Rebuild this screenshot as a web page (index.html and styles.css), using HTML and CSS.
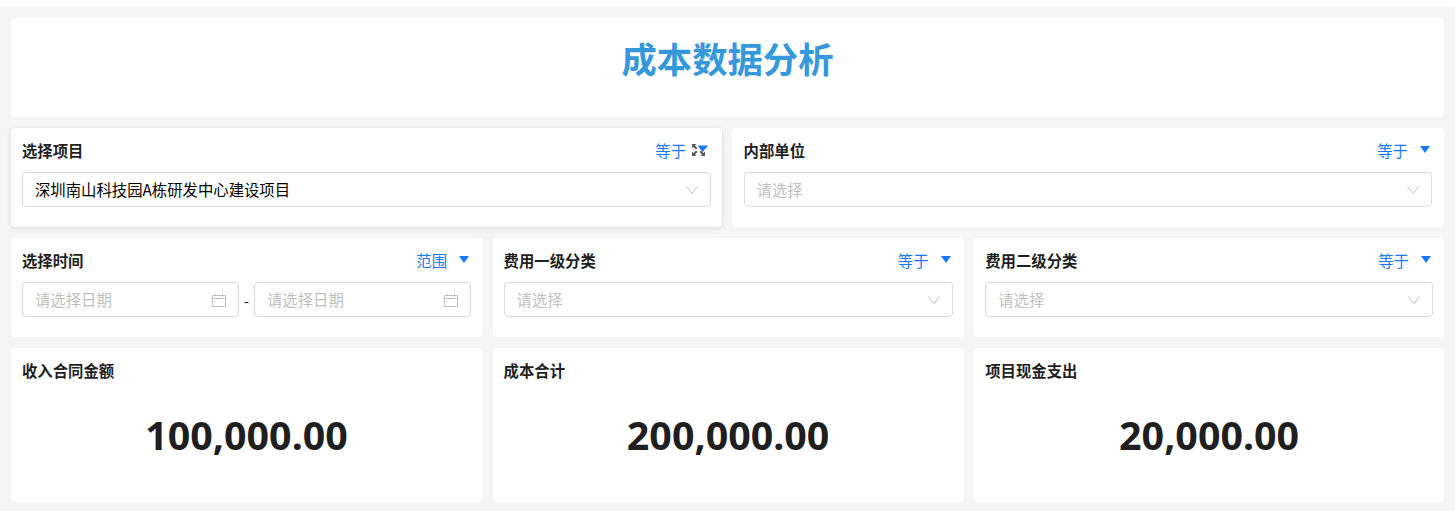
FILE: index.html
```html
<!DOCTYPE html>
<html lang="zh-CN">
<head>
    <meta charset="UTF-8">
    <title>成本数据分析</title>
    <link rel="stylesheet" href="styles.css">
</head>
<body>
    <div class="page">
        <div class="card title-card"><h1>成本数据分析</h1></div>

        <div class="row row-2">
            <div class="card filter raised">
                <div class="filter-head">
                    <span class="filter-name">选择项目</span>
                    <span class="op">等于
                        <svg class="move-icon" width="18" height="14" viewBox="0 0 18 14">
                            <path d="M1 1h4.500L4 2.500l2.500 2.500-1.500 1.500L2.500 4 1 5.500zM14 13H9.500L11 11.500 8.500 9 10 7.500l2.500 2.500L14 8.500zM1 13V8.500l1.500 1.500L5 7.500 6.500 9 4 11.500 5.500 13z" fill="#595959"/>
                            <path d="M6.500 2.500h10.500l-5.250 6.500z" fill="#1677ff"/>
                        </svg>
                    </span>
                </div>
                <div class="select filled">深圳南山科技园A栋研发中心建设项目
                    <svg class="chevron" width="12" height="8" viewBox="0 0 12 8"><path d="M.5 .5l5.500 7 5.500-7" stroke="#bfbfbf" fill="none"/></svg>
                </div>
            </div>
            <div class="card filter">
                <div class="filter-head">
                    <span class="filter-name">内部单位</span>
                    <span class="op">等于 <i class="caret"></i></span>
                </div>
                <div class="select">请选择
                    <svg class="chevron" width="12" height="8" viewBox="0 0 12 8"><path d="M.5 .5l5.500 7 5.500-7" stroke="#bfbfbf" fill="none"/></svg>
                </div>
            </div>
        </div>

        <div class="row row-3">
            <div class="card filter">
                <div class="filter-head">
                    <span class="filter-name">选择时间</span>
                    <span class="op">范围 <i class="caret"></i></span>
                </div>
                <div class="date-range">
                    <div class="select">请选择日期
                        <svg class="calendar" width="14" height="14" viewBox="0 0 14 14"><path d="M.5 2.500h13v11H.5zM.5 5.500h13M3.500 .5v3M10.500 .5v3" stroke="#bfbfbf" fill="none"/></svg>
                    </div>
                    <span class="dash">-</span>
                    <div class="select">请选择日期
                        <svg class="calendar" width="14" height="14" viewBox="0 0 14 14"><path d="M.5 2.500h13v11H.5zM.5 5.500h13M3.500 .5v3M10.500 .5v3" stroke="#bfbfbf" fill="none"/></svg>
                    </div>
                </div>
            </div>
            <div class="card filter">
                <div class="filter-head">
                    <span class="filter-name">费用一级分类</span>
                    <span class="op">等于 <i class="caret"></i></span>
                </div>
                <div class="select">请选择
                    <svg class="chevron" width="12" height="8" viewBox="0 0 12 8"><path d="M.5 .5l5.500 7 5.500-7" stroke="#bfbfbf" fill="none"/></svg>
                </div>
            </div>
            <div class="card filter">
                <div class="filter-head">
                    <span class="filter-name">费用二级分类</span>
                    <span class="op">等于 <i class="caret"></i></span>
                </div>
                <div class="select">请选择
                    <svg class="chevron" width="12" height="8" viewBox="0 0 12 8"><path d="M.5 .5l5.500 7 5.500-7" stroke="#bfbfbf" fill="none"/></svg>
                </div>
            </div>
        </div>

        <div class="row row-3">
            <div class="card stat">
                <span class="filter-name">收入合同金额</span>
                <div class="stat-value">100,000.00</div>
            </div>
            <div class="card stat">
                <span class="filter-name">成本合计</span>
                <div class="stat-value">200,000.00</div>
            </div>
            <div class="card stat">
                <span class="filter-name">项目现金支出</span>
                <div class="stat-value">20,000.00</div>
            </div>
        </div>
    </div>
</body>
</html>
```

FILE: styles.css
```css
html, body {
    margin: 0;
    height: 100%;
    background: #fff;
    overflow: hidden;
}

body {
    font-family: "Noto Sans CJK SC", "Noto Sans", sans-serif;
    color: #1f1f1f;
    font-size: 15.36px;
}

.page {
    margin-top: 7px;
    padding: 11px 11px 9px;
    background: #f5f5f5;
    display: flex;
    flex-direction: column;
    gap: 11px;
}

.row {
    display: grid;
}

.row-2 {
    column-gap: 10.4px;
    grid-template-columns: 711px 711.6px;
}

.row-2 .filter + .filter {
    padding-left: 11.2px;
    padding-right: 12px;
}

.row-3 {
    column-gap: 10.6px;
    grid-template-columns: 471px 471px 469.8px;
}

.card {
    background: #fff;
    border-radius: 4px;
    box-sizing: border-box;
}

.raised {
    box-shadow: 0 1px 5px rgba(0, 0, 0, 0.12);
}

.title-card {
    height: 99px;
    padding-top: 14px;
    display: flex;
    justify-content: center;
}

h1 {
    margin: 0;
    font-size: 35.36px;
    font-weight: 700;
    line-height: 52px;
    color: #3498db;
}

.filter {
    height: 99px;
    padding: 11px 11px 0;
}

.filter-head {
    display: flex;
    justify-content: space-between;
    align-items: center;
    height: 21px;
    margin-bottom: 12px;
}

.filter-head .filter-name {
    padding-top: 2px;
}

.filter-name {
    font-size: 15.36px;
    font-weight: 700;
    line-height: 21px;
    color: #1f1f1f;
}

.op {
    display: flex;
    align-items: center;
    color: #1677ff;
    font-size: 15.36px;
}

.caret {
    width: 0;
    height: 0;
    margin: 0 2px 0 12px;
    border-left: 5.500px solid transparent;
    border-right: 5.500px solid transparent;
    border-top: 7px solid #1677ff;
}

.move-icon {
    margin-left: 5px;
    margin-right: 2px;
}

.select {
    height: 35px;
    box-sizing: border-box;
    border: 1px solid #d9d9d9;
    border-radius: 4px;
    padding: 0 12px 2px 12px;
    display: flex;
    align-items: center;
    justify-content: space-between;
    color: #bfbfbf;
}

.select.filled {
    color: #000;
}

.chevron,
.calendar {
    margin-top: 2px;
}

.date-range {
    display: grid;
    grid-template-columns: 217px 1fr 217px;
    align-items: center;
}

.dash {
    text-align: center;
    color: #1f1f1f;
}

.stat {
    height: 154px;
    padding: 11px 11px 0;
}

.stat-value {
    margin-top: 26px;
    text-align: center;
    font-family: "Noto Sans", sans-serif;
    font-size: 39.4px;
    font-weight: 700;
    line-height: 56px;
    color: #1f1f1f;
}
```
